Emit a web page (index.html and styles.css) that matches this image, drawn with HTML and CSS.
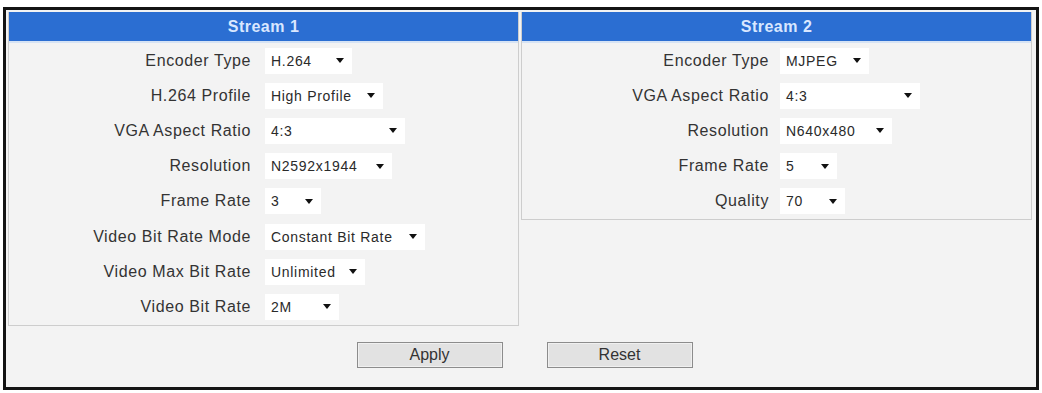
FILE: index.html
```html
<!DOCTYPE html>
<html>
<head>
<meta charset="utf-8">
<link rel="stylesheet" href="styles.css">
</head>
<body>
<div class="frame">
  <div class="panels">
    <section class="panel panel-left">
      <div class="panel-head">Stream 1</div>
      <div class="rows">
        <div class="row"><span class="label">Encoder Type</span><div class="sel w87"><span>H.264</span><i class="arrow"></i></div></div>
        <div class="row"><span class="label">H.264 Profile</span><div class="sel w118"><span>High Profile</span><i class="arrow"></i></div></div>
        <div class="row"><span class="label">VGA Aspect Ratio</span><div class="sel w140"><span>4:3</span><i class="arrow"></i></div></div>
        <div class="row"><span class="label">Resolution</span><div class="sel w127"><span>N2592x1944</span><i class="arrow"></i></div></div>
        <div class="row"><span class="label">Frame Rate</span><div class="sel w56"><span>3</span><i class="arrow"></i></div></div>
        <div class="row"><span class="label">Video Bit Rate Mode</span><div class="sel w160"><span>Constant Bit Rate</span><i class="arrow"></i></div></div>
        <div class="row"><span class="label">Video Max Bit Rate</span><div class="sel w100"><span>Unlimited</span><i class="arrow"></i></div></div>
        <div class="row"><span class="label">Video Bit Rate</span><div class="sel w74"><span>2M</span><i class="arrow"></i></div></div>
      </div>
    </section>
    <section class="panel panel-right">
      <div class="panel-head">Stream 2</div>
      <div class="rows">
        <div class="row"><span class="label">Encoder Type</span><div class="sel w89"><span>MJPEG</span><i class="arrow"></i></div></div>
        <div class="row"><span class="label">VGA Aspect Ratio</span><div class="sel w140"><span>4:3</span><i class="arrow"></i></div></div>
        <div class="row"><span class="label">Resolution</span><div class="sel w112"><span>N640x480</span><i class="arrow"></i></div></div>
        <div class="row"><span class="label">Frame Rate</span><div class="sel w57"><span>5</span><i class="arrow"></i></div></div>
        <div class="row"><span class="label">Quality</span><div class="sel w65"><span>70</span><i class="arrow"></i></div></div>
      </div>
    </section>
  </div>
  <div class="actions">
    <button class="btn" type="button">Apply</button>
    <button class="btn" type="button">Reset</button>
  </div>
</div>
</body>
</html>
```
FILE: styles.css
```css
* { box-sizing: border-box; }
html, body { margin: 0; padding: 0; background: #ffffff; }
body { padding: 7px 0 0 3px; font-family: "Liberation Sans", Arial, sans-serif; }

.frame {
  width: 1036px;
  height: 383px;
  border: 3px solid #141414;
  background: #f3f3f3;
  padding: 2px 3px 0 2px;
}

.panels {
  display: grid;
  grid-template-columns: 511px 511px;
  column-gap: 2px;
  align-items: start;
}

.panel {
  border: 1px solid #cdcdcd;
  border-top: none;
  background: #f3f3f3;
}

.panel-head {
  height: 31px;
  background: #2b6ed2;
  border-bottom: 2px solid #d6e3f4;
  color: #d9e7ff;
  font-weight: bold;
  font-size: 16px;
  letter-spacing: 0.5px;
  text-align: center;
  line-height: 29px;
}

.rows { display: flex; flex-direction: column; }

.row {
  height: 35.2px;
  display: grid;
  align-items: center;
  column-gap: 14px;
}
.panel-left .row { grid-template-columns: 242px auto; }
.panel-right .row { grid-template-columns: 247px auto; column-gap: 11px; }

.label {
  text-align: right;
  font-size: 16px;
  letter-spacing: 0.6px;
  color: #333333;
  white-space: nowrap;
}

.sel {
  height: 26px;
  background: #ffffff;
  display: flex;
  align-items: center;
  justify-content: space-between;
  padding: 0 8px 0 6px;
  font-size: 14px;
  letter-spacing: 0.7px;
  color: #2a2a2a;
  white-space: nowrap;
  justify-self: start;
}

.arrow {
  width: 0;
  height: 0;
  border-left: 4.5px solid transparent;
  border-right: 4.5px solid transparent;
  border-top: 5px solid #111;
  flex: none;
}

.w56 { width: 56px; }
.w57 { width: 57px; }
.w65 { width: 65px; }
.w74 { width: 74px; }
.w87 { width: 87px; }
.w89 { width: 89px; }
.w100 { width: 100px; }
.w112 { width: 112px; }
.w118 { width: 118px; }
.w127 { width: 127px; }
.w140 { width: 140px; }
.w160 { width: 160px; }

.actions {
  display: flex;
  justify-content: center;
  gap: 44px;
  margin-top: 16px;
  padding-left: 8px;
}

.btn {
  width: 146px;
  height: 26px;
  background: #e2e2e2;
  border: 1px solid #8c8c8c;
  box-shadow: inset 0 0 0 1px #f0f0f0;
  font-family: "Liberation Sans", Arial, sans-serif;
  font-size: 16px;
  color: #333333;
  padding: 0;
}
```
